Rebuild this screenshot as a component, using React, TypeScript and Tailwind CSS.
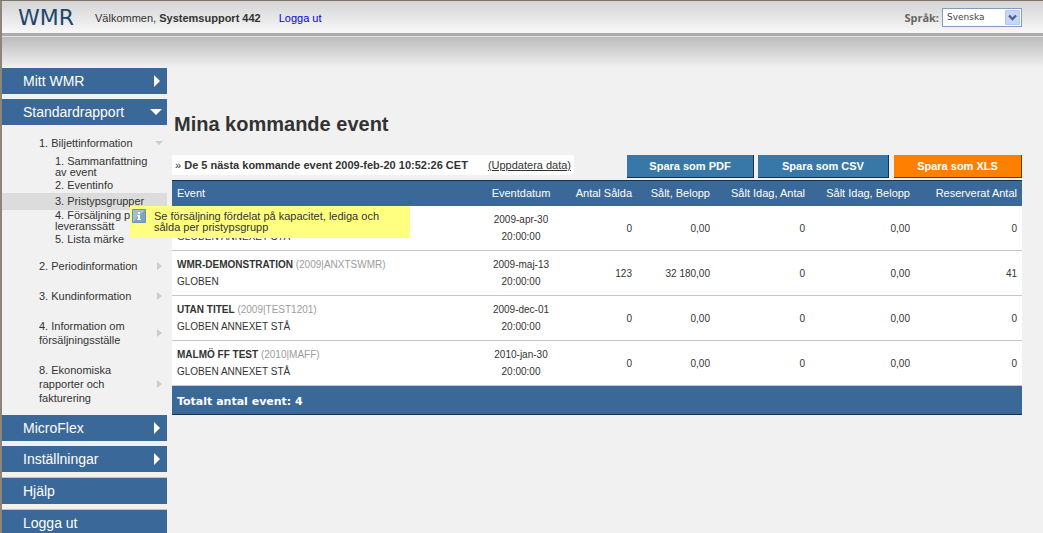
import clsx from "clsx";
import type { ReactNode } from "react";

type EventRow = {
  title: string;
  code: string;
  venue: string;
  date: string;
  time: string;
  values: string[];
};

const columns = [
  { label: "Antal Sålda", width: "w-[73px]" },
  { label: "Sålt, Belopp", width: "w-[78px]" },
  { label: "Sålt Idag, Antal", width: "w-[95px]" },
  { label: "Sålt Idag, Belopp", width: "w-[105px]" },
  { label: "Reserverat Antal", width: "w-[107px]" },
];

const rows: EventRow[] = [
  { title: "", code: "", venue: "GLOBEN ANNEXET STÅ", date: "2009-apr-30", time: "20:00:00", values: ["0", "0,00", "0", "0,00", "0"] },
  { title: "WMR-DEMONSTRATION", code: "(2009|ANXTSWMR)", venue: "GLOBEN", date: "2009-maj-13", time: "20:00:00", values: ["123", "32 180,00", "0", "0,00", "41"] },
  { title: "UTAN TITEL", code: "(2009|TEST1201)", venue: "GLOBEN ANNEXET STÅ", date: "2009-dec-01", time: "20:00:00", values: ["0", "0,00", "0", "0,00", "0"] },
  { title: "MALMÖ FF TEST", code: "(2010|MAFF)", venue: "GLOBEN ANNEXET STÅ", date: "2010-jan-30", time: "20:00:00", values: ["0", "0,00", "0", "0,00", "0"] },
];

const reports = [
  "2. Periodinformation",
  "3. Kundinformation",
  "4. Information om försäljningsställe",
  "8. Ekonomiska rapporter och fakturering",
];

function ArrowRight({ className }: { className?: string }) {
  return (
    <svg viewBox="0 0 6 12" preserveAspectRatio="none" className={className} fill="currentColor" aria-hidden="true">
      <path d="M0 0l6 6-6 6z" />
    </svg>
  );
}

function ArrowDown({ className }: { className?: string }) {
  return (
    <svg viewBox="0 0 12 6" preserveAspectRatio="none" className={className} fill="currentColor" aria-hidden="true">
      <path d="M0 0h12L6 6z" />
    </svg>
  );
}

function MenuItem({ children, arrow, line }: { children: ReactNode; arrow?: "right" | "down"; line?: boolean }) {
  return (
    <a
      href="#"
      className={clsx(
        "flex items-center justify-between bg-[#3a6898] pl-[21px] text-sm leading-[26px] text-white",
        line && "border-t border-[#c0c0c0]",
      )}
    >
      {children}
      {arrow === "right" && <ArrowRight className="mr-[7px] h-3 w-1.5" />}
      {arrow === "down" && <ArrowDown className="mr-[5px] h-1.5 w-3" />}
    </a>
  );
}

function InfoIcon() {
  return (
    <svg viewBox="0 0 14 14" className="mt-[3px] h-3.5 w-3.5 shrink-0" aria-hidden="true">
      <rect width="14" height="14" rx="1" fill="#6f93a8" />
      <rect x="1" y="1" width="12" height="12" fill="#a3bfc9" />
      <path d="M1 13h12V1z" fill="#7fa3b8" />
      <path d="M6 3h2v2H6zM5 6h3v4h1v1H5v-1h1V7H5z" fill="#fff" />
    </svg>
  );
}

function Sidebar() {
  return (
    <nav className="w-[165px] shrink-0">
      <MenuItem arrow="right">Mitt WMR</MenuItem>
      <div className="mt-[5px]">
        <MenuItem arrow="down">Standardrapport</MenuItem>
      </div>

      <ul className="pt-[3px] pb-px text-[11px] leading-[14px]">
        <li className="pb-1">
          <a href="#" className="flex items-center justify-between py-2 pr-1 pl-[37px]">
            1. Biljettinformation
            <ArrowDown className="h-1 w-2 text-[#d0ccc3]" />
          </a>
          <ul className="-mt-0.5 leading-[11px]">
            <li className="pb-0.5 pl-[53px]">
              <a href="#" className="block w-[100px]">1. Sammanfattning av event</a>
            </li>
            <li className="pb-0.5 pl-[53px]">
              <a href="#">2. Eventinfo</a>
            </li>
            <li className="relative bg-[#dcdcdc] py-[3px] pl-[53px]">
              <a href="#" className="block">3. Pristypsgrupper</a>
              <div role="tooltip" className="absolute top-[13px] left-32 z-10 flex h-8 w-[280px] bg-[#ffff80] pr-5 pl-0.5">
                <InfoIcon />
                <p className="pt-[5px] pl-2">Se försäljning fördelat på kapacitet, lediga och sålda per pristypsgrupp</p>
              </div>
            </li>
            <li className="pb-0.5 pl-[53px]">
              <a href="#" className="block w-[100px]">4. Försäljning per leveranssätt</a>
            </li>
            <li className="pb-0.5 pl-[53px]">
              <a href="#">5. Lista märke</a>
            </li>
          </ul>
        </li>
        {reports.map((report) => (
          <li key={report}>
            <a href="#" className="flex items-center justify-between py-2 pr-[5px] pl-[37px]">
              <span className="w-[105px]">{report}</span>
              <ArrowRight className="h-2 w-[5px] text-[#d0ccc3]" />
            </a>
          </li>
        ))}
      </ul>

      <div className="flex flex-col gap-[5px] pt-px">
        <MenuItem arrow="right">MicroFlex</MenuItem>
        <MenuItem arrow="right">Inställningar</MenuItem>
        <MenuItem line>Hjälp</MenuItem>
        <MenuItem line>Logga ut</MenuItem>
      </div>
    </nav>
  );
}

function EventTable() {
  return (
    <table className="w-full table-fixed bg-white text-right text-[10px]">
      <thead className="border-t border-[#16324f] bg-[#3a6898] text-[11px] leading-[25px] text-white">
        <tr>
          <th className="pl-[5px] text-left font-normal">Event</th>
          <th className="w-[86px] text-center font-normal">Eventdatum</th>
          {columns.map((column) => (
            <th key={column.label} className={clsx("pr-[5px] font-normal whitespace-nowrap", column.width)}>
              {column.label}
            </th>
          ))}
        </tr>
      </thead>
      <tbody className="leading-[17px]">
        {rows.map((row) => (
          <tr key={row.date} className="border-b border-[#c6c6c6]">
            <td className="py-[5px] pl-[5px] text-left">
              <div className="h-[17px]">
                <b>{row.title}</b> <span className="text-[#9c9c9c]">{row.code}</span>
              </div>
              <div>{row.venue}</div>
            </td>
            <td className="text-center">
              <div>{row.date}</div>
              <div>{row.time}</div>
            </td>
            {row.values.map((value, i) => (
              <td key={columns[i].label} className="pr-[5px]">{value}</td>
            ))}
          </tr>
        ))}
      </tbody>
      <tfoot>
        <tr className="border-y border-[#16324f] bg-[#3a6898] text-white">
          <td colSpan={7} className="pt-1 pl-[5px] text-left font-['DejaVu_Sans',sans-serif] text-[11px] leading-6 font-bold">
            Totalt antal event: 4
          </td>
        </tr>
      </tfoot>
    </table>
  );
}

export default function App() {
  return (
    <div className="h-screen overflow-hidden border-t border-l-2 border-t-[#7a7568] border-l-[#8b8678] bg-[#f1f1f1] font-['Liberation_Sans',Arial,sans-serif] text-[11px] text-[#333]">
      <header className="flex h-8 items-center bg-linear-to-b from-[#d4d4d4] to-[#f8f8f8] pr-[21px] pl-4">
        <span className="font-['DejaVu_Sans',sans-serif] text-[22px] text-[#23466f]">WMR</span>
        <p className="pt-0.5 pl-[21px]">
          Välkommen, <b>Systemsupport 442</b>
          <a href="#" className="pl-[18px] text-[#0000ee]">Logga ut</a>
        </p>
        <label htmlFor="language" className="ml-auto pt-0.5 pr-[3px] font-['Open_Sans',sans-serif] font-bold text-[#666]">
          Språk:
        </label>
        <div className="relative">
          <select
            id="language"
            className="block h-[19px] w-20 appearance-none border border-[#7f9db9] bg-white pt-0.5 pl-1 font-['DejaVu_Sans',sans-serif] text-[9px] text-[#444]"
          >
            <option>Svenska</option>
          </select>
          <svg viewBox="0 0 15 15" className="pointer-events-none absolute top-0.5 right-0.5 h-[15px] w-[15px]" aria-hidden="true">
            <rect width="15" height="15" rx="1" fill="#b4c8f6" />
            <rect x="1" y="1" width="13" height="13" fill="#c5d5fc" />
            <path d="M4 5.5L7.500 9 11 5.500" fill="none" stroke="#4d6185" strokeWidth="2.4" />
          </svg>
        </div>
      </header>
      <div className="h-[35px] border-t-[3px] border-[#acacac] bg-linear-to-b from-[#bababa] to-[#f1f1f1]">
        <div className="h-px bg-[#e4e4e4]" />
      </div>

      <div className="flex">
        <Sidebar />
        <main className="min-w-0 flex-1 pr-[21px] pl-[5px]">
          <h1 className="mt-[42px] mb-[17px] pl-0.5 text-xl leading-7 font-bold">Mina kommande event</h1>
          <div className="flex h-[25px] items-start">
            <p className="bg-white px-[3px] leading-5">
              » <b>De 5 nästa kommande event 2009-feb-20 10:52:26 CET</b>
              <a href="#" className="ml-5 underline">(Uppdatera data)</a>
            </p>
            <div className="ml-auto flex gap-1 leading-[22px] font-bold text-white">
              <button className="w-[127px] border-r border-b border-[#16324f] bg-[#3878a8]">Spara som PDF</button>
              <button className="w-[131px] border-r border-b border-[#16324f] bg-[#3878a8]">Spara som CSV</button>
              <button className="ml-px w-32 border-r border-b border-[#703800] bg-[#ff8000]">Spara som XLS</button>
            </div>
          </div>
          <EventTable />
        </main>
      </div>
    </div>
  );
}
